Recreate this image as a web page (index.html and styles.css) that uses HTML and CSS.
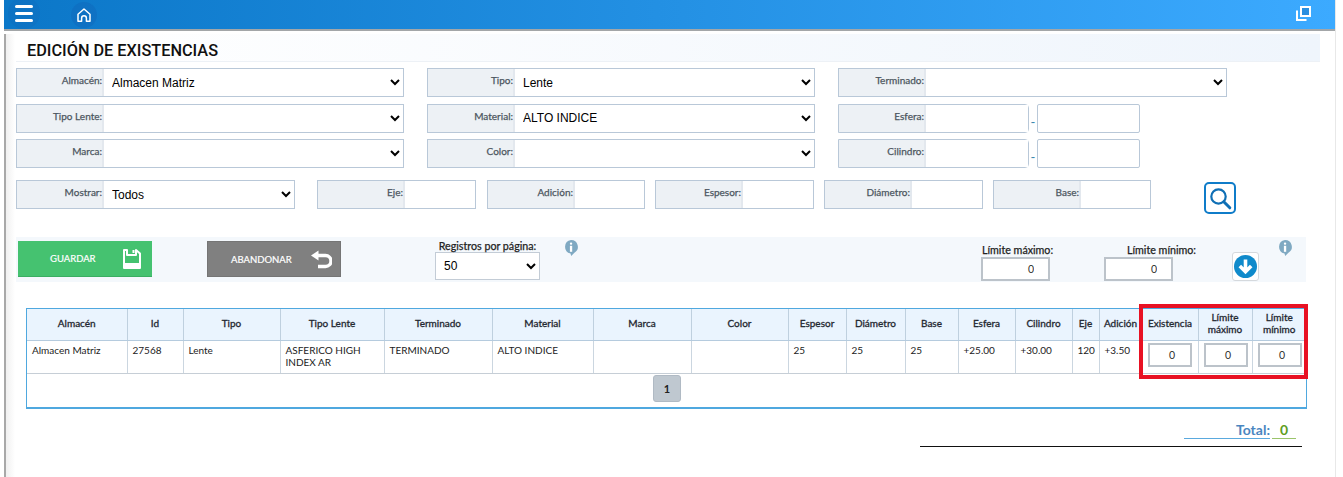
FILE: index.html
```html
<!DOCTYPE html>
<html lang="es">
<head>
<meta charset="utf-8">
<title>Edición de existencias</title>
<link rel="stylesheet" href="styles.css">
</head>
<body>
<div class="app">
  <header class="topbar">
    <span class="round menu"><svg width="18" height="18" viewBox="0 0 18 18"><path d="M1.5 2.5h15M1.5 9.5h15M1.5 16.5h15" stroke="#fff" stroke-width="3" stroke-linecap="round"/></svg></span>
    <span class="round home"><svg width="16" height="16" viewBox="0 0 16 16"><path d="M2 14.2V7.2L8 2l6 5.2v7h-3.6v-3a2.4 2.4 0 0 0-4.8 0v3z" fill="none" stroke="#fff" stroke-width="1.5" stroke-linejoin="round"/></svg></span>
    <span class="restore"><svg width="15" height="15" viewBox="0 0 15 15"><rect x="5" y="1" width="9" height="9" fill="#2a8fe0" stroke="#fff" stroke-width="2"/><path d="M2 5.5H1V14h8.5v-1" fill="none" stroke="#fff" stroke-width="2"/></svg></span>
  </header>
  <main class="page">
    <h1 class="title">EDICIÓN DE EXISTENCIAS</h1>

    <section class="filters">
      <div class="field"><label class="lbl">Almacén:</label><select class="sel"><option>Almacen Matriz</option></select></div>
      <div class="field"><label class="lbl">Tipo:</label><select class="sel"><option>Lente</option></select></div>
      <div class="field"><label class="lbl">Terminado:</label><select class="sel"><option></option></select></div>

      <div class="field"><label class="lbl">Tipo Lente:</label><select class="sel"><option></option></select></div>
      <div class="field"><label class="lbl">Material:</label><select class="sel"><option>ALTO INDICE</option></select></div>
      <div class="range">
        <div class="field rounded w191"><label class="lbl">Esfera:</label><input class="inp"></div>
        <span class="dash">-</span>
        <input class="solo">
      </div>

      <div class="field"><label class="lbl">Marca:</label><select class="sel"><option></option></select></div>
      <div class="field"><label class="lbl">Color:</label><select class="sel"><option></option></select></div>
      <div class="range">
        <div class="field rounded w191"><label class="lbl">Cilindro:</label><input class="inp"></div>
        <span class="dash">-</span>
        <input class="solo">
      </div>
    </section>

    <section class="row4">
      <div class="field w279"><label class="lbl">Mostrar:</label><select class="sel"><option>Todos</option></select></div>
      <div class="field w159 first"><label class="lbl">Eje:</label><input class="inp"></div>
      <div class="field w158 second"><label class="lbl">Adición:</label><input class="inp"></div>
      <div class="field w159"><label class="lbl">Espesor:</label><input class="inp"></div>
      <div class="field w159"><label class="lbl">Diámetro:</label><input class="inp"></div>
      <div class="field w158"><label class="lbl">Base:</label><input class="inp"></div>
      <button class="search" type="button" aria-label="Buscar"><svg width="24" height="24" viewBox="0 0 24 24"><circle cx="10.5" cy="10.5" r="7.2" fill="none" stroke="#0f6fb5" stroke-width="2.2"/><path d="M15.8 15.8l6 6" stroke="#0f6fb5" stroke-width="3" stroke-linecap="round"/></svg></button>
    </section>

    <section class="toolbar">
      <button class="act save" type="button"><span>GUARDAR</span>
        <svg width="20" height="20" viewBox="0 0 20 20"><path d="M2 1h3v5h9V1l4 3.5V19H2z" fill="none" stroke="#fff" stroke-width="2" stroke-linejoin="round"/><path d="M10.5 1h2v3h-2zM2 14h16v5H2z" fill="#fff"/></svg></button>
      <button class="act back" type="button"><span>ABANDONAR</span>
        <svg width="22" height="19" viewBox="0 0 22 19"><path d="M8.5 0.5v10L1 5.5z" fill="#fff"/><path d="M7 5.5h8.5a5.5 5.5 0 0 1 0 11H8" fill="none" stroke="#fff" stroke-width="3.4"/></svg></button>
      <div class="perpage"><div class="cap">Registros por página:</div><select class="persel"><option>50</option></select></div>
      <svg class="info i1" width="14" height="16" viewBox="0 0 14 16"><path d="M7 0a6.8 6.8 0 0 1 3.4 12.7L7.2 16l-.7-2.6A6.8 6.8 0 0 1 7 0z" fill="#7fa9c2"/><rect x="5.9" y="2.4" width="2.3" height="2.3" rx="1" fill="#fff"/><rect x="5.9" y="5.8" width="2.3" height="6" fill="#fff"/></svg>
      <div class="lim lmax"><div class="cap">Límite máximo:</div><input class="liminp" value="0"></div>
      <div class="lim lmin"><div class="cap shift">Límite mínimo:</div><input class="liminp" value="0"></div>
      <button class="down" type="button" aria-label="Aplicar"><svg width="23" height="23" viewBox="0 0 23 23"><circle cx="11.5" cy="11.5" r="11.5" fill="#0f8acb"/><path d="M11.5 4.5v12M5.8 11l5.7 5.7 5.7-5.7" fill="none" stroke="#fff" stroke-width="3.6"/></svg></button>
      <svg class="info i2" width="14" height="16" viewBox="0 0 14 16"><path d="M7 0a6.8 6.8 0 0 1 3.4 12.7L7.2 16l-.7-2.6A6.8 6.8 0 0 1 7 0z" fill="#7fa9c2"/><rect x="5.9" y="2.4" width="2.3" height="2.3" rx="1" fill="#fff"/><rect x="5.9" y="5.8" width="2.3" height="6" fill="#fff"/></svg>
    </section>

    <section class="grid-wrap">
      <table class="grid">
        <thead>
          <tr>
            <th class="c1">Almacén</th><th class="c2">Id</th><th class="c3">Tipo</th><th class="c4">Tipo Lente</th><th class="c5">Terminado</th><th class="c6">Material</th><th class="c7">Marca</th><th class="c8">Color</th><th class="c9">Espesor</th><th class="c10">Diámetro</th><th class="c11">Base</th><th class="c12">Esfera</th><th class="c13">Cilindro</th><th class="c14">Eje</th><th class="c15">Adición</th><th class="c16">Existencia</th><th class="c17">Límite máximo</th><th class="c18">Límite mínimo</th>
          </tr>
        </thead>
        <tbody>
          <tr>
            <td>Almacen Matriz</td><td>27568</td><td>Lente</td><td>ASFERICO HIGH INDEX AR</td><td>TERMINADO</td><td>ALTO INDICE</td><td></td><td></td><td>25</td><td>25</td><td>25</td><td>+25.00</td><td>+30.00</td><td>120</td><td>+3.50</td>
            <td class="incell"><input class="cellinp" value="0"></td><td class="incell"><input class="cellinp" value="0"></td><td class="incell"><input class="cellinp" value="0"></td>
          </tr>
        </tbody>
      </table>
      <div class="pager"><button class="pg" type="button">1</button></div>
      <div class="redbox"></div>
    </section>

    <section class="total"><span class="t-label">Total:</span><span class="t-value">0</span></section>
    <div class="rule"></div>
  </main>
</div>
</body>
</html>
```
FILE: styles.css
```css
* { box-sizing: border-box; }
html, body { margin: 0; height: 100%; overflow: hidden; background: #fff; }
body { font-family: "Lato", "Liberation Sans", sans-serif; }
.app { margin-left: 4px; width: 1332px; height: 477px; border-right: 1px solid #e8e8e8; }

.topbar { height: 31px; display: flex; align-items: center; position: relative; background: linear-gradient(to right, #0b77c8, #3caaff); border-bottom: 2px solid #a3a6a8; }
.round { display: flex; align-items: center; justify-content: center; border-radius: 50%; }
.menu { width: 32px; height: 32px; margin-left: 4px; background: rgba(20, 90, 170, .15); margin-top: -3px; }
.home { width: 26px; height: 26px; margin-left: 31px; background: rgba(20, 80, 170, .22); }
.restore { margin-left: auto; margin-right: 24px; height: 15px; display: flex; margin-top: -3px; }

.page { height: 446px; border-left: 2px solid #a8a8a8; padding-left: 10px; background: linear-gradient(to right, #f0f0f0, #fff 9px); }
.title { margin: 3px 0 0; width: 1304px; height: 28px; padding-left: 11px; font: 500 16.3px/33px "Roboto", sans-serif; color: #111; background: linear-gradient(to right, #fff, #eff5fc); border-bottom: 1px solid #edf1f6; }

.filters { margin-top: 6px; display: grid; grid-template-columns: 388px 388px 389px; column-gap: 23px; row-gap: 6.5px; }
.field { display: flex; height: 29px; border: 1px solid #b9c8d8; background: #fff; }
.lbl { flex: 0 0 87px; background: #edf1f5; border-right: 2px solid #e3e8ee; text-align: right; padding: 4px 0 0; font-size: 10px; line-height: 15px; color: #4c5660; -webkit-text-stroke: .25px #4c5660; }
.sel { flex: 1; min-width: 0; border: 0; background: #fff; font: 12px "Liberation Sans", sans-serif; color: #000; padding-left: 4px; outline: 0; }
.inp { flex: 1; min-width: 0; border: 0; background: #fff; outline: 0; }
.range { display: flex; }
.w191 { width: 191px; }
.rounded { border-radius: 0 4px 4px 0; }
.dash { width: 8px; font-size: 13px; color: #3c8ab0; text-align: center; padding-top: 10px; }
.solo { width: 103px; height: 29px; border: 1px solid #b9c8d8; border-radius: 2px; outline: 0; }

.row4 { margin-top: 12px; height: 35px; display: flex; align-items: flex-start; gap: 10px; }
.w279 { width: 279px; }
.w159 { width: 159px; }
.w158 { width: 158px; }
.first { margin-left: 12px; }
.second { margin-left: 1px; }
.search { width: 32px; height: 32px; margin: 2px 0 0 43px; padding: 0; border: 2px solid #0f7cc9; border-radius: 5px; background: #fff; display: flex; align-items: center; justify-content: center; }

.toolbar { margin-top: 22px; width: 1290px; height: 45px; background: #f4f8fc; display: flex; align-items: flex-start; }
.act { height: 36px; width: 134px; margin-top: 4px; border: 0; padding: 0; display: flex; align-items: center; color: #fff; font: 400 9.5px "Lato", sans-serif; -webkit-text-stroke: .2px #fff; position: relative; }
.save { margin-left: 2px; background: #45c270; border-bottom: 1px solid #3aae62; padding-left: 32px; }
.save span { width: 72px; text-align: left; }
.back { margin-left: 55px; background: #808080; border: 1px solid #757575; padding-left: 23px; }
.back span { width: 79px; text-align: left; }
.perpage { margin: 2px 0 0 94px; width: 105px; }
.cap { font-size: 10.7px; line-height: 13px; color: #222; -webkit-text-stroke: .25px #222; white-space: nowrap; text-align: center; }
.persel { display: block; width: 105px; height: 28px; border: 1px solid #c3ccd6; background: #fff; font: 12px "Liberation Sans", sans-serif; color: #000; padding-left: 4px; outline: 0; }
.info { flex: none; }
.i1 { margin: 3px 0 0 24px; }
.lim { width: 69px; margin-top: 6px; }
.lmax { margin-left: 403px; }
.lmin { margin-left: 54px; }
.lim .cap { line-height: 14px; text-align: left; padding-left: 1px; }
.lim .shift { padding-left: 23px; }
.liminp { display: block; width: 69px; height: 24px; border: 2px solid #bcc3ca; background: #fff; text-align: right; padding: 0 14px 0 0; font: 10.5px "Lato", sans-serif; color: #333; outline: 0; }
.down { width: 27px; height: 29px; margin: 15px 0 0 59px; padding: 0; border: 1px solid #d5d9dd; border-radius: 3px; background: #fff; display: flex; align-items: center; justify-content: center; }
.i2 { margin: 3px 0 0 19px; }

.grid-wrap { margin: 26px 0 0 10px; width: 1281px; height: 101px; position: relative; border: 1px solid #4fa8df; border-bottom-width: 2px; }
.grid { border-collapse: collapse; table-layout: fixed; width: 1279px; font-size: 10px; line-height: 12px; color: #222; }
.grid th { height: 31px; background: #eaf4fe; font-weight: 400; color: #1f2730; -webkit-text-stroke: .3px #1f2730; padding: 0 2px 2px; border-right: 1px solid #bfd0df; border-bottom: 1px solid #b5cbde; text-align: center; }
.grid td { height: 33px; padding: 3px 5px 0; vertical-align: top; border-right: 1px solid #cbd6e0; border-bottom: 1px solid #c6ced6; }
.grid th:last-child, .grid td:last-child { border-right: 0; }
.c1 { width: 100px; } .c2 { width: 56px; } .c3 { width: 97px; } .c4 { width: 104px; } .c5 { width: 108px; } .c6 { width: 101px; } .c7 { width: 98px; } .c8 { width: 97px; } .c9 { width: 58px; } .c10 { width: 59px; } .c11 { width: 53px; } .c12 { width: 57px; } .c13 { width: 57px; } .c14 { width: 27px; } .c15 { width: 43px; } .c16 { width: 56px; } .c17 { width: 54px; } .c18 { width: 54px; }
.grid td.incell { padding: 2px 0 0 5px; }
.cellinp { display: block; width: 44px; height: 24px; border: 2px solid #bcc3ca; background: #fff; text-align: center; padding: 0 0 0 5px; font: 10.5px "Lato", sans-serif; color: #333; outline: 0; }
.pager { display: flex; justify-content: center; padding: 1px 0 0 1px; }
.pg { width: 28px; height: 27px; padding: 0; border: 1px solid #b0bac4; border-radius: 3px; background: #bfc8d0; font: 700 11px "Lato", sans-serif; color: #222; }
.redbox { position: absolute; left: 1112px; top: -5px; width: 169px; height: 75px; border: 4px solid #e81123; }

.total { margin-top: 12px; width: 1280px; display: flex; align-items: flex-end; justify-content: flex-end; font-size: 14px; line-height: 17px; font-weight: 700; }
.t-label { width: 86px; text-align: right; color: #4a86c0; border-bottom: 1px solid #5aa9de; }
.t-value { width: 24px; margin-left: 2px; text-align: center; color: #5f9e1e; border-bottom: 1px solid #9ac46a; }
.rule { margin: 7px 0 0 904px; width: 382px; height: 1px; background: #111; }
```
